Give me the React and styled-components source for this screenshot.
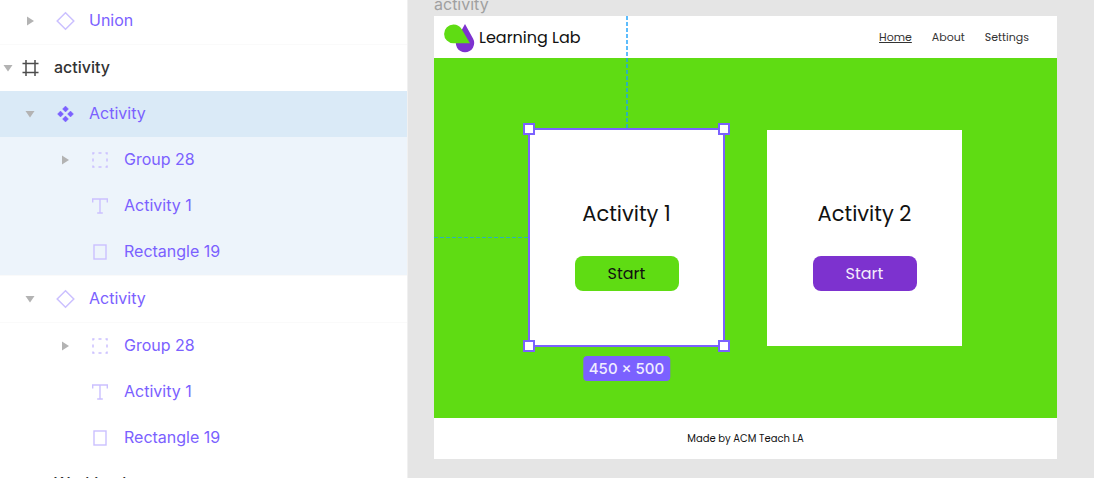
import React from "react";
import styled, { createGlobalStyle, css } from "styled-components";

const GlobalStyle = createGlobalStyle`
  *, *::before, *::after { box-sizing: border-box; }
  body { margin: 0; background: #ffffff; }
`;

const ui = `Inter, "Liberation Sans", sans-serif`;
const brand = `Poppins, Inter, "Liberation Sans", sans-serif`;

const Editor = styled.div`
  display: grid;
  grid-template-columns: minmax(0, 408fr) minmax(0, 686fr);
  height: 100vh;
  overflow: hidden;
  font-family: ${ui};
`;

const Layers = styled.nav`
  overflow: hidden;
  background: #ffffff;
  border-right: 1px solid #f0f0f0;
`;

const List = styled.ul`
  list-style: none;
  margin: 0;
  padding: 0;
`;

const Section = styled.li`
  border-bottom: 1px solid #fafafa;
  background: ${(p) => (p.$tinted ? "#edf4fb" : "transparent")};
  ${(p) => p.$clipped && css`margin-top: -2px;`}
`;

const indents = [0, 22, 57];

const Row = styled.button`
  display: flex;
  align-items: center;
  width: 100%;
  height: 46px;
  border: 0;
  padding: 0 0 2px ${(p) => indents[p.$depth]}px;
  background: ${(p) => (p.$selected ? "#daeaf7" : "transparent")};
  color: ${(p) => (p.$top ? "#333333" : "#7b61ff")};
  font-family: ${ui};
  font-size: 16px;
  line-height: 20px;
  font-weight: ${(p) => (p.$top ? 500 : 400)};
  text-align: left;
`;

const Caret = styled.svg`
  flex: none;
  width: 16px;
  height: 16px;
  margin-top: 2px;
  fill: #b3b3b3;
`;

const Glyph = styled.svg`
  flex: none;
  width: 20px;
  height: 20px;
  margin: 2px 14px 0 ${(p) => (p.$top ? 4 : 17)}px;
`;

const Canvas = styled.main`
  display: flex;
  flex-direction: column;
  padding: 0 37px 19px 26px;
  background: #e5e5e5;
  overflow: hidden;
`;

const FrameLabel = styled.div`
  display: flex;
  align-items: flex-end;
  height: 16px;
  color: #a0a0a0;
  font-size: 16px;
  line-height: 24px;
`;

const Frame = styled.section`
  flex: 1;
  display: flex;
  flex-direction: column;
  background: #ffffff;
  font-family: ${brand};
  color: #111111;
`;

const Header = styled.header`
  display: flex;
  align-items: center;
  justify-content: space-between;
  height: 42px;
  padding: 0 28px 0 9px;
`;

const Brand = styled.div`
  display: flex;
  align-items: center;
  gap: 4px;
  padding-top: 2px;
  font-size: 16px;
  line-height: 24px;
`;

const Links = styled.nav`
  display: flex;
  gap: 20px;
`;

const NavLink = styled.a`
  color: #333333;
  font-size: 11px;
  line-height: 16px;
  text-decoration: ${(p) => (p.$current ? "underline" : "none")};
`;

const Board = styled.div`
  flex: 1;
  display: flex;
  align-items: center;
  justify-content: center;
  gap: 43px;
  background: #5fdc13;
`;

const Card = styled.article`
  position: relative;
  display: flex;
  flex-direction: column;
  align-items: center;
  width: 195px;
  height: 216px;
  padding-top: 68px;
  background: #ffffff;
`;

const CardTitle = styled.h2`
  margin: 0 0 26px;
  font-size: 21px;
  line-height: 32px;
  font-weight: 400;
`;

const StartButton = styled.button`
  width: 104px;
  height: 35px;
  border: 0;
  border-radius: 8px;
  padding: 0;
  background: ${(p) => (p.$purple ? "#7d32cf" : "#5fdc13")};
  color: ${(p) => (p.$purple ? "#f4ecfb" : "#111111")};
  font-family: ${brand};
  font-size: 16px;
  line-height: 24px;
`;

const Outline = styled.div`
  position: absolute;
  inset: -2px -1px -1px;
  border: 2px solid #7b61ff;
  pointer-events: none;
`;

const Handle = styled.span`
  position: absolute;
  width: 12px;
  height: 12px;
  border: 2px solid #7b61ff;
  background: #ffffff;
  ${(p) => (p.$bottom ? "bottom" : "top")}: -7px;
  ${(p) => (p.$right ? "right" : "left")}: -7px;
`;

const SizeBadge = styled.div`
  position: absolute;
  top: calc(100% + 10px);
  left: 50%;
  transform: translateX(-50%);
  border-radius: 4px;
  padding: 0 6px;
  background: #7b61ff;
  color: #f0edff;
  font-family: ${ui};
  font-size: 15px;
  line-height: 25px;
  font-weight: 500;
  white-space: nowrap;
`;

const guideColor = "rgba(24, 160, 251, 0.7)";

const GuideUp = styled.span`
  position: absolute;
  bottom: 100%;
  left: calc(50% - 1px);
  width: 2px;
  height: 114px;
  background: repeating-linear-gradient(to bottom, ${guideColor} 0 4px, transparent 4px 6px);
`;

const GuideLeft = styled.span`
  position: absolute;
  right: 100%;
  top: calc(50% - 1px);
  width: 95px;
  height: 1px;
  background: repeating-linear-gradient(to right, ${guideColor} 0 4px, transparent 4px 6px);
`;

const Footer = styled.footer`
  display: flex;
  align-items: center;
  justify-content: center;
  height: 41px;
  font-size: 10px;
  line-height: 16px;
`;

const light = "#cbc0ff";

function Icon({ kind, top }) {
  return (
    <Glyph viewBox="0 0 20 20" fill="none" aria-hidden="true" $top={top}>
      {kind === "instance" && (
        <path d="M10.500 1.700 18.800 10 10.500 18.300 2.200 10Z" stroke={light} strokeWidth="1.500" />
      )}
      {kind === "component" && (
        <path
          d="M10.500 2l3 3-3 3-3-3ZM10.500 12l3 3-3 3-3-3ZM5.500 7l3 3-3 3-3-3ZM15.500 7l3 3-3 3-3-3Z"
          fill="#7b61ff"
          stroke="#7b61ff"
          strokeWidth="0.400"
          strokeLinejoin="round"
        />
      )}
      {kind === "frame" && (
        <path d="M6 2v16M15 2v16M2.500 5.500h16M2.500 14.500h16" stroke="#4d4d4d" strokeWidth="1.500" />
      )}
      {kind === "group" && (
        <path
          d="M3 4.500V3h1.500M8.500 3h3M15.500 3H17v1.500M17 8.500v3M17 15.500V17h-1.500M11.500 17h-3M4.500 17H3v-1.500M3 11.500v-3"
          stroke={light}
          strokeWidth="1.500"
        />
      )}
      {kind === "text" && (
        <path d="M2.700 6.500V3h14.600v3.500M10 3v14M7.200 17h5.600" stroke={light} strokeWidth="1.400" />
      )}
      {kind === "rect" && (
        <rect x="4" y="3" width="12" height="14" stroke={light} strokeWidth="1.400" />
      )}
    </Glyph>
  );
}

function LayerRow({ kind, label, depth, open, selected }) {
  const top = depth === 0;
  return (
    <Row type="button" $depth={depth} $selected={selected} $top={top}>
      <Caret viewBox="0 0 16 16" aria-hidden="true">
        {open === true && <path d="M3.500 5h9L8 11.500Z" />}
        {open === false && <path d="M5 3.500v9L12 8Z" />}
      </Caret>
      <Icon kind={kind} top={top} />
      {label}
    </Row>
  );
}

function Children() {
  return (
    <>
      <LayerRow kind="group" label="Group 28" depth={2} open={false} />
      <LayerRow kind="text" label="Activity 1" depth={2} />
      <LayerRow kind="rect" label="Rectangle 19" depth={2} />
    </>
  );
}

function Logo() {
  return (
    <svg width="32" height="30" viewBox="0 0 32 30" aria-hidden="true">
      <path d="M22 1 30 15.500A9.200 9.200 0 1 1 14 15.500Z" fill="#7d32cf" />
      <path d="M10.500 1.500a9.400 9.400 0 1 0 0 18.800H27L18.600 6A9.400 9.400 0 0 0 10.500 1.500Z" fill="#5fdc13" />
    </svg>
  );
}

export default function App() {
  return (
    <>
      <GlobalStyle />
      <Editor>
        <Layers aria-label="Layers">
          <List>
            <Section $clipped>
              <LayerRow kind="instance" label="Union" depth={1} open={false} />
            </Section>
            <li>
              <LayerRow kind="frame" label="activity" depth={0} open />
            </li>
            <Section $tinted>
              <LayerRow kind="component" label="Activity" depth={1} open selected />
              <Children />
            </Section>
            <Section>
              <LayerRow kind="instance" label="Activity" depth={1} open />
            </Section>
            <li>
              <Children />
            </li>
            <li>
              <LayerRow label="Working b" depth={0} />
            </li>
          </List>
        </Layers>
        <Canvas>
          <FrameLabel>activity</FrameLabel>
          <Frame>
            <Header>
              <Brand>
                <Logo />
                Learning Lab
              </Brand>
              <Links aria-label="Main">
                <NavLink href="#home" $current>Home</NavLink>
                <NavLink href="#about">About</NavLink>
                <NavLink href="#settings">Settings</NavLink>
              </Links>
            </Header>
            <Board>
              <Card>
                <CardTitle>Activity 1</CardTitle>
                <StartButton type="button">Start</StartButton>
                <GuideUp />
                <GuideLeft />
                <Outline>
                  <Handle />
                  <Handle $right />
                  <Handle $bottom />
                  <Handle $bottom $right />
                </Outline>
                <SizeBadge>450 × 500</SizeBadge>
              </Card>
              <Card>
                <CardTitle>Activity 2</CardTitle>
                <StartButton type="button" $purple>Start</StartButton>
              </Card>
            </Board>
            <Footer>Made by ACM Teach LA</Footer>
          </Frame>
        </Canvas>
      </Editor>
    </>
  );
}
